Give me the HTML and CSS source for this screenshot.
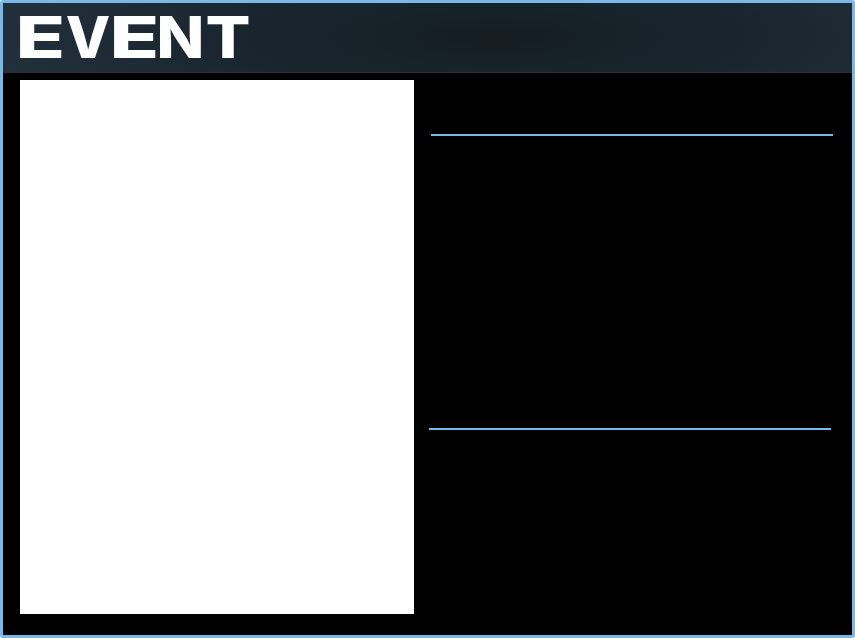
FILE: index.html
```html
<!DOCTYPE html>
<html lang="en">
<head>
<meta charset="utf-8">
<title>Event</title>
<link rel="stylesheet" href="styles.css">
</head>
<body>
<main class="window">
  <header class="titlebar">
    <h1 class="title"><span class="glyph e">E</span><span class="glyph v">V</span><span class="glyph e">E</span><span class="glyph n">N</span><span class="glyph t">T</span></h1>
  </header>
  <div class="content">
    <section class="poster"></section>
    <section class="details">
      <div class="heading"></div>
      <div class="description"></div>
    </section>
  </div>
</main>
</body>
</html>
```
FILE: styles.css
```css
* { box-sizing: border-box; }
body { margin: 0; background: #fff; overflow: hidden; }
.window {
  width: 855px;
  height: 638px;
  border: 3px solid #7ab8e8;
  border-radius: 3px;
  background: #000;
  display: flex;
  flex-direction: column;
}
.titlebar {
  height: 70px;
  flex: none;
  padding: 13px 17px;
  background: radial-gradient(ellipse 540px 120px at 58% 50%, #141c22 0%, #172229 25%, #1a262f 50%, #202e39 85%, #22313c 100%);
  border-bottom: 1px solid #22303a;
}
.title {
  margin: 0;
  display: flex;
  gap: 4.75px;
  color: #fff;
  font: 800 57.8px/42px Inter, "Liberation Sans", sans-serif;
}
.glyph {
  width: 42px;
  height: 42px;
  transform-origin: 0 50%;
}
.e { transform: translateX(-4.5px) scaleX(1.41); }
.v { transform: translateX(-1px) scaleX(1); }
.n { transform: translateX(-3.5px) scaleX(1.08); }
.t { transform: translateX(-1.5px) scaleX(1.15); }
.content {
  flex: 1;
  display: flex;
  padding: 7px 19px 21px 17px;
  gap: 15px;
}
.poster { width: 394px; background: #fff; }
.details { width: 404px; }
.heading {
  height: 56px;
  margin-left: 2px;
  width: 402px;
  border-bottom: 2px solid #7ab8e8;
}
.description {
  height: 294px;
  width: 402px;
  border-bottom: 2px solid #7ab8e8;
}
```
